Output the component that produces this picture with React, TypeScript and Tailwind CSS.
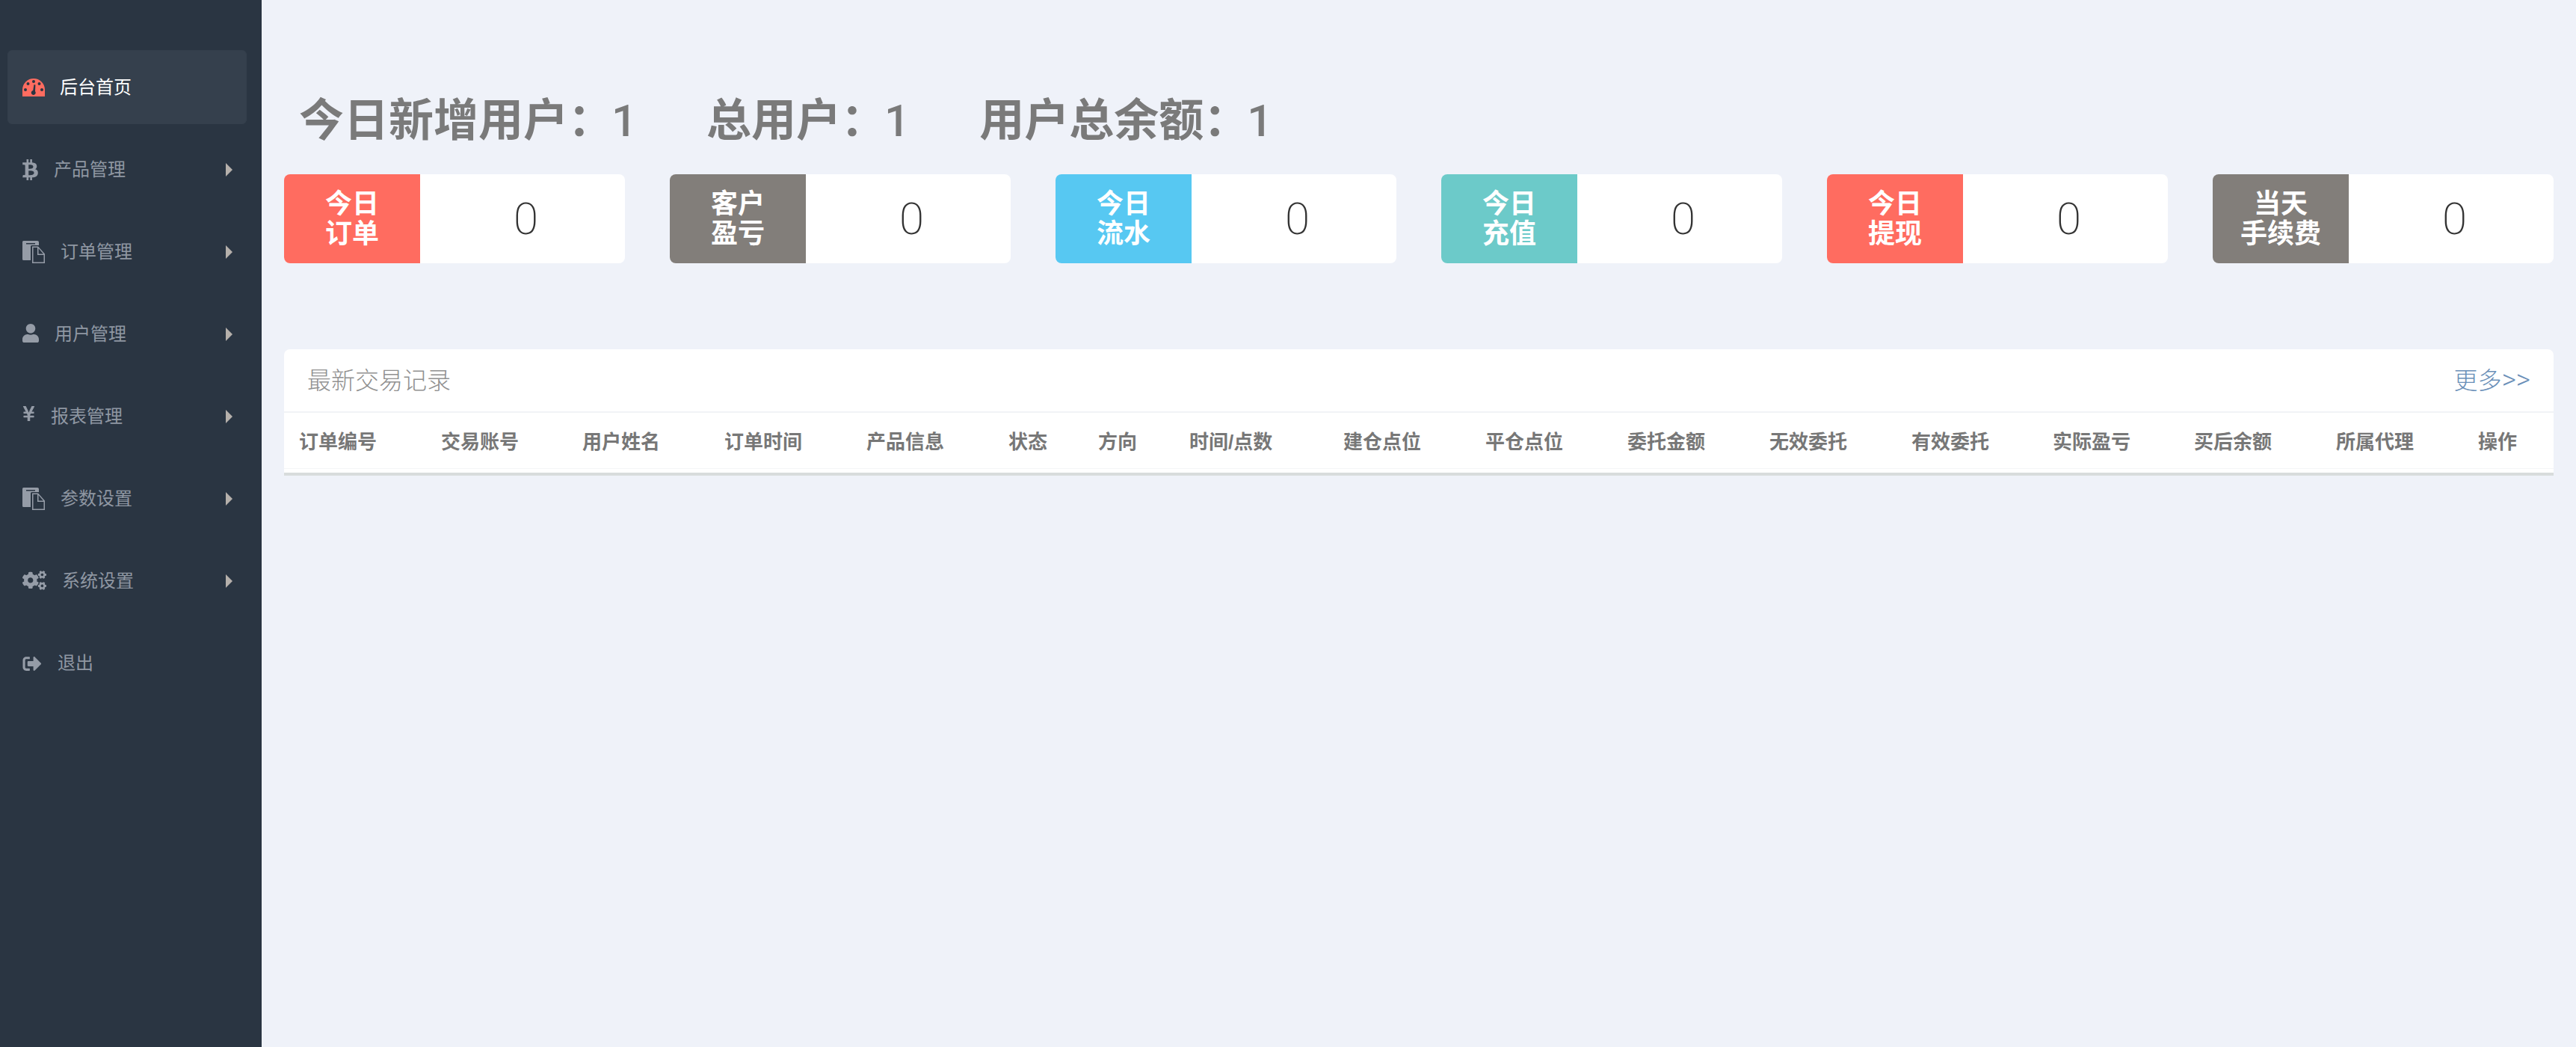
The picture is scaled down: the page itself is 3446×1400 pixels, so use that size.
import { FaBtc, FaUser, FaYenSign, FaCogs, FaSignOutAlt } from "react-icons/fa";
import type { ReactNode } from "react";

const cjk = "font-['Liberation_Sans','Noto_Sans_CJK_SC',sans-serif]";

const GaugeIcon = () => (
  <svg viewBox="0 0 30 24" className="h-[24px] w-[30px]">
    <path d="M0 24 V15 A15 15 0 0 1 30 15 V24 Z" fill="#ff6c60" />
    <g fill="#2a3542">
      <circle cx="15" cy="4" r="2" />
      <circle cx="7.5" cy="7" r="2" />
      <circle cx="22.5" cy="7" r="2" />
      <circle cx="4" cy="15" r="2" />
      <circle cx="26" cy="15" r="2" />
      <path d="M14.2 16 L15.5 8 L17.4 8.5 L17 17 A3 3 0 1 1 14.2 16 Z" />
    </g>
  </svg>
);

const FilesIcon = () => (
  <svg viewBox="0 0 30 30" className="h-[30px] w-[30px]" fill="#959ca7">
    <path d="M1.5 0 H20 Q22 0 22 2 V6 H12.5 Q11 6 11 7.5 V26 H1.5 Q0 26 0 24.5 V1.5 Q0 0 1.5 0 Z" />
    <rect x="5" y="3" width="12" height="1.5" fill="#2a3542" />
    <path d="M13 7.5 H21 L30 17.5 V30 H13 Z M14.5 9 V28.5 H28.5 V19 H20 V9 Z M21.5 10 V17.5 H28 Z" fillRule="evenodd" />
  </svg>
);

const navItems: { label: string; icon: ReactNode; arrow?: boolean }[] = [
  { label: "产品管理", icon: <FaBtc className="h-[34px] w-[21px] text-[#959ca7]" />, arrow: true },
  { label: "订单管理", icon: <FilesIcon />, arrow: true },
  { label: "用户管理", icon: <FaUser className="mb-[4px] h-[27px] w-[22px] text-[#959ca7]" />, arrow: true },
  { label: "报表管理", icon: <FaYenSign className="mb-[8px] h-[24px] w-[17px] text-[#959ca7]" />, arrow: true },
  { label: "参数设置", icon: <FilesIcon />, arrow: true },
  { label: "系统设置", icon: <FaCogs className="mb-[2px] h-[28px] w-[32px] text-[#959ca7]" />, arrow: true },
  { label: "退出", icon: <FaSignOutAlt className="h-[25px] w-[26px] text-[#959ca7]" /> },
];

const stats = [
  { top: "今日", bottom: "订单", color: "bg-[#ff6c60]" },
  { top: "客户", bottom: "盈亏", color: "bg-[#827e7a]" },
  { top: "今日", bottom: "流水", color: "bg-[#57c8f2]" },
  { top: "今日", bottom: "充值", color: "bg-[#6ccac9]" },
  { top: "今日", bottom: "提现", color: "bg-[#ff6c60]" },
  { top: "当天", bottom: "手续费", color: "bg-[#827e7a]" },
];

const columns = [
  { label: "订单编号", width: "w-[190px]" },
  { label: "交易账号", width: "w-[189px]" },
  { label: "用户姓名", width: "w-[190px]" },
  { label: "订单时间", width: "w-[190px]" },
  { label: "产品信息", width: "w-[190px]" },
  { label: "状态", width: "w-[120px]" },
  { label: "方向", width: "w-[122px]" },
  { label: "时间/点数", width: "w-[206px]" },
  { label: "建仓点位", width: "w-[190px]" },
  { label: "平仓点位", width: "w-[190px]" },
  { label: "委托金额", width: "w-[190px]" },
  { label: "无效委托", width: "w-[190px]" },
  { label: "有效委托", width: "w-[189px]" },
  { label: "实际盈亏", width: "w-[189px]" },
  { label: "买后余额", width: "w-[190px]" },
  { label: "所属代理", width: "w-[190px]" },
  { label: "操作", width: "w-[121px]" },
];

const titles = ["今日新增用户", "总用户", "用户总余额"];

export default function App() {
  return (
    <div className={`flex h-[1400px] w-[3446px] overflow-hidden bg-[#eff2f9] ${cjk}`}>
      {/* SIDEBAR */}
      <aside className="flex w-[350px] shrink-0 flex-col bg-[#2a3542] pt-[67px]">
        <div className="mx-[10px] flex h-[99px] w-[320px] items-center gap-[20px] rounded-[6px] border border-[#343f4c] bg-[#35404d] pl-[19px] text-[24px] text-white">
          <GaugeIcon />
          <span>后台首页</span>
        </div>
        <nav className="mt-[6px] flex flex-col">
          {navItems.map((item) => (
            <div key={item.label} className="relative flex h-[110px] items-center gap-[21px] pl-[30px] text-[24px] text-[#8f97a2]">
              {item.icon}
              <span>{item.label}</span>
              {item.arrow && (
                <span className="absolute left-[302px] top-[46px] h-0 w-0 border-y-[9px] border-l-[9px] border-y-transparent border-l-[#b5b0ab]" />
              )}
            </div>
          ))}
        </nav>
      </aside>

      {/* MAIN */}
      <main className="flex min-w-0 flex-1 flex-col px-[30px] pt-[132px]">
        <div className="flex gap-[93px] pl-[20px] text-[60px] font-bold leading-[60px] text-[#7a7a7a]">
          {titles.map((t) => (
            <span key={t}>
              {t}：<span className="ml-[-2px] font-['Roboto',sans-serif] font-medium">1</span>
            </span>
          ))}
        </div>

        <div className="mt-[41px] grid grid-cols-6 gap-[60px]">
          {stats.map((s, i) => (
            <div key={i} className="flex h-[119px] overflow-hidden rounded-[8px] bg-white">
              <div className={`flex w-[182px] shrink-0 flex-col items-center justify-center text-[36px] font-bold leading-[40px] text-white ${s.color}`}>
                <span>{s.top}</span>
                <span>{s.bottom}</span>
              </div>
              <div className="flex flex-1 items-center justify-center pl-[9px] font-['Roboto',sans-serif] text-[60px] font-extralight text-[#333]">0</div>
            </div>
          ))}
        </div>

        <section className="mt-[115px] rounded-t-[8px] bg-white shadow-[0_4px_0_#d8dcdc]">
          <div className="flex h-[85px] items-center justify-between border-b-2 border-[#f1f3f6] px-[31px] text-[32px] font-light">
            <span className="text-[#909090]">最新交易记录</span>
            <a className="text-[#6a8fb8]">
              更多<span className="font-['Roboto',sans-serif] text-[37px] font-light leading-[32px]">&gt;&gt;</span>
            </a>
          </div>
          <table className="w-full table-fixed">
            <thead>
              <tr>
                {columns.map((c) => (
                  <th key={c.label} className={`${c.width} h-[74px] border-b border-[#f4f5f7] pl-[20px] pt-[6px] text-left text-[26px] font-bold text-[#777]`}>
                    {c.label}
                  </th>
                ))}
              </tr>
            </thead>
          </table>
          <div className="h-[5px]" />
        </section>
      </main>
    </div>
  );
}
